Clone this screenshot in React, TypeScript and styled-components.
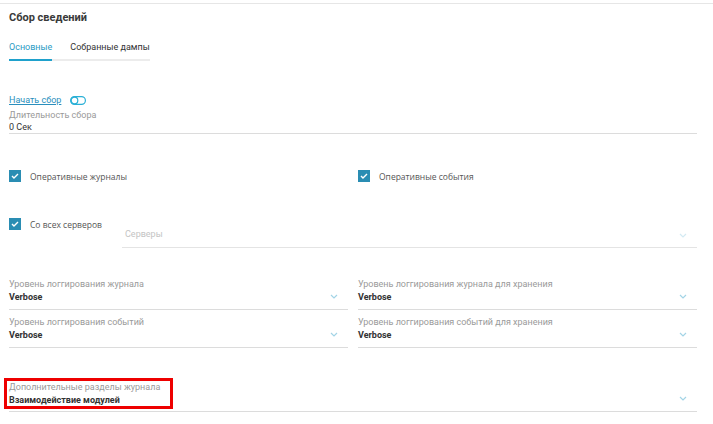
import React from 'react';
import styled, { createGlobalStyle } from 'styled-components';

const GlobalStyle = createGlobalStyle`
  html, body {
    margin: 0;
    padding: 0;
    background: #fff;
    font-family: Roboto, "Liberation Sans", Arial, sans-serif;
    color: #333;
  }
`;

const Page = styled.div`
  width: 713px;
  height: 424px;
  overflow: hidden;
  box-sizing: border-box;
  border-top: 1px solid #e6e6e6;
  margin-top: 3px;
`;

const Content = styled.div`
  width: 688px;
  padding-left: 9px;
  display: flex;
  flex-direction: column;
`;

const Title = styled.h2`
  margin: 0;
  padding-top: 7px;
  font-size: 11px;
  line-height: 13px;
  font-weight: 700;
  color: #3a3a3a;
`;

const Tabs = styled.div`
  display: flex;
  align-self: flex-start;
  margin-top: 18px;
  border-bottom: 2px solid #ececec;
`;

const Tab = styled.div<{ $active?: boolean }>`
  font-size: 9px;
  line-height: 11px;
  white-space: nowrap;
  padding: 0 0 6px;
  margin-right: ${({ $active }) => ($active ? '18px' : '0')};
  margin-bottom: -2px;
  color: ${({ $active }) => ($active ? '#2a9bc4' : '#333')};
  border-bottom: 2px solid ${({ $active }) => ($active ? '#1fa1cc' : 'transparent')};
`;

const StartRow = styled.div`
  display: flex;
  align-items: center;
  gap: 9px;
  margin-top: 34px;
  height: 11px;
`;

const StartLink = styled.a`
  font-size: 9px;
  line-height: 11px;
  color: #2a8fbd;
  text-decoration: underline;
  cursor: pointer;
`;

const Field = styled.div<{ $half?: boolean; $tight?: boolean }>`
  position: relative;
  width: ${({ $half }) => ($half ? '339px' : '100%')};
  border-bottom: 1px solid #dcdcdc;
  padding-bottom: ${({ $tight }) => ($tight ? '0' : '6px')};
  box-sizing: border-box;
`;

const Label = styled.div`
  font-size: 9px;
  line-height: 12px;
  color: #9a9a9a;
  white-space: nowrap;
`;

const Value = styled.div<{ $bold?: boolean }>`
  font-size: 9px;
  line-height: 12px;
  margin-top: ${({ $bold }) => ($bold ? '1px' : '0')};
  font-weight: ${({ $bold }) => ($bold ? 700 : 400)};
  color: #333;
  white-space: nowrap;
`;

const Placeholder = styled.div`
  font-size: 9px;
  line-height: 12px;
  color: #c4c4c4;
  padding-left: 3px;
`;

const Chevron = styled.svg`
  position: absolute;
  right: 10px;
  bottom: 10px;
  width: 8px;
  height: 5px;
`;

const Grid = styled.div`
  display: grid;
  grid-template-columns: 339px 339px;
  column-gap: 10px;
`;

const CheckRow = styled.div`
  display: flex;
  align-items: center;
  height: 12px;
`;

const CheckBox = styled.span`
  width: 12px;
  height: 12px;
  background: #2a8db3;
  display: flex;
  align-items: center;
  justify-content: center;
  margin-right: 9px;
  flex-shrink: 0;
`;

const CheckLabel = styled.span`
  font-family: "Open Sans", "Noto Sans", sans-serif;
  font-size: 8.5px;
  color: #555;
  white-space: nowrap;
`;

const ServersRow = styled.div`
  display: flex;
  align-items: flex-start;
  margin-top: 36px;
`;

const ServersCheck = styled.div`
  width: 113px;
  flex-shrink: 0;
`;

const ServersSelect = styled.div`
  flex: 1;
  margin-top: 10px;
  position: relative;
  border-bottom: 1px solid #e4e4e4;
  padding-bottom: 7px;
`;

const Highlight = styled.div`
  align-self: flex-start;
  margin-left: -5px;
  padding: 0 2px;
  border: 3px solid #ee0000;
  width: 169px;
  box-sizing: border-box;
  margin-bottom: -4px;
`;

const ChevronIcon: React.FC<{ color?: string; bottom?: number }> = ({ color = '#a3d4e6', bottom }) => (
  <Chevron viewBox="0 0 8 5" style={bottom !== undefined ? { bottom } : undefined}>
    <path d="M1 1 L4 4 L7 1" fill="none" stroke={color} strokeWidth="1.2" />
  </Chevron>
);

const Check: React.FC<{ label: string }> = ({ label }) => (
  <CheckRow>
    <CheckBox>
      <svg width="8" height="6" viewBox="0 0 8 6">
        <path d="M1 3 L3 5 L7 1" fill="none" stroke="#fff" strokeWidth="1.4" />
      </svg>
    </CheckBox>
    <CheckLabel>{label}</CheckLabel>
  </CheckRow>
);

const Toggle = () => (
  <svg width="16" height="9" viewBox="0 0 16 9">
    <rect x="0.6" y="0.6" width="14.8" height="7.8" rx="3.9" fill="none" stroke="#2ab0d6" strokeWidth="1.2" />
    <circle cx="4.5" cy="4.5" r="3.3" fill="none" stroke="#2ab0d6" strokeWidth="1.2" />
  </svg>
);

const selects = [
  { label: 'Уровень логгирования журнала', value: 'Verbose' },
  { label: 'Уровень логгирования журнала для хранения', value: 'Verbose' },
  { label: 'Уровень логгирования событий', value: 'Verbose' },
  { label: 'Уровень логгирования событий для хранения', value: 'Verbose' },
];

export default function App() {
  return (
    <>
      <GlobalStyle />
      <Page>
        <Content>
          <Title>Сбор сведений</Title>
          <Tabs>
            <Tab $active>Основные</Tab>
            <Tab>Собранные дампы</Tab>
          </Tabs>

          <StartRow>
            <StartLink>Начать сбор</StartLink>
            <Toggle />
          </StartRow>

          <Field $tight style={{ marginTop: 3 }}>
            <Label>Длительность сбора</Label>
            <Value>0 Сек</Value>
          </Field>

          <Grid style={{ marginTop: 36 }}>
            <Check label="Оперативные журналы" />
            <Check label="Оперативные события" />
          </Grid>

          <ServersRow>
            <ServersCheck>
              <Check label="Со всех серверов" />
            </ServersCheck>
            <ServersSelect>
              <Placeholder>Серверы</Placeholder>
              <ChevronIcon color="#d3eaf3" bottom={9} />
            </ServersSelect>
          </ServersRow>

          <Grid style={{ marginTop: 30, rowGap: 6 }}>
            {selects.map((s) => (
              <Field key={s.label} $half>
                <Label>{s.label}</Label>
                <Value $bold>{s.value}</Value>
                <ChevronIcon />
              </Field>
            ))}
          </Grid>

          <Field style={{ marginTop: 30 }}>
            <Highlight>
              <Label>Дополнительные разделы журнала</Label>
              <Value $bold>Взаимодействие модулей</Value>
            </Highlight>
            <ChevronIcon />
          </Field>
        </Content>
      </Page>
    </>
  );
}
